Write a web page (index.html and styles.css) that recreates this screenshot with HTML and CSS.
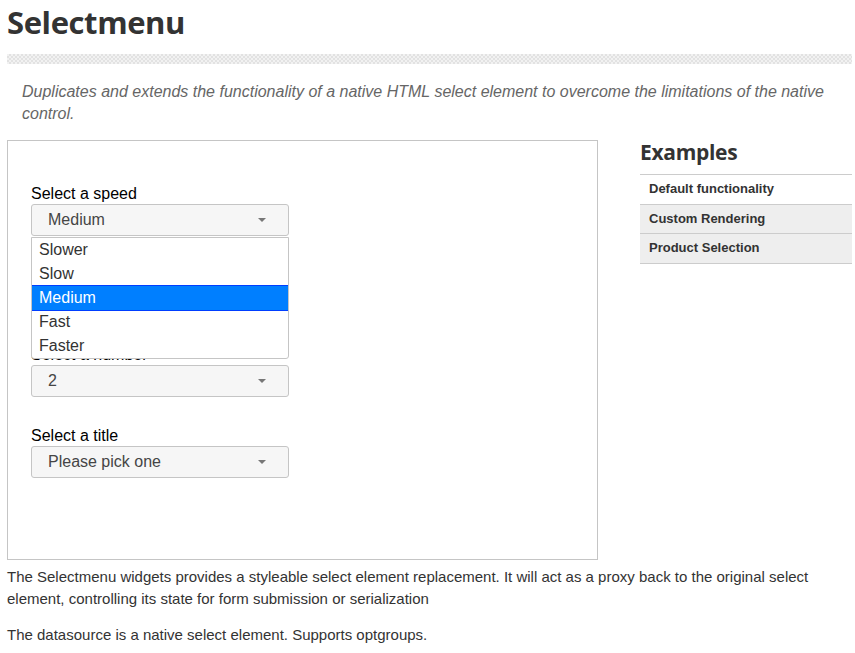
FILE: index.html
```html
<!DOCTYPE html>
<html lang="en">
<head>
  <meta charset="UTF-8">
  <title>Selectmenu</title>
  <link rel="stylesheet" href="styles.css">
</head>
<body>
  <h1 class="entry-title">Selectmenu</h1>
  <div class="hatch"></div>

  <p class="desc">Duplicates and extends the functionality of a native HTML select element to overcome the limitations of the native control.</p>

  <div class="columns">
    <div class="main">
      <div class="demo-frame">
        <div class="field">
          <label>Select a speed</label>
          <div class="sm-button"><span class="sm-text">Medium</span><span class="sm-icon"></span></div>
          <ul class="sm-menu">
            <li>Slower</li>
            <li>Slow</li>
            <li class="active">Medium</li>
            <li>Fast</li>
            <li>Faster</li>
          </ul>
        </div>
        <div class="field">
          <label>Select a file</label>
          <div class="sm-button"><span class="sm-text">Some unknown file</span><span class="sm-icon"></span></div>
        </div>
        <div class="field">
          <label>Select a number</label>
          <div class="sm-button"><span class="sm-text">2</span><span class="sm-icon"></span></div>
        </div>
        <div class="field">
          <label>Select a title</label>
          <div class="sm-button"><span class="sm-text">Please pick one</span><span class="sm-icon"></span></div>
        </div>
      </div>

      <p class="body-text">The Selectmenu widgets provides a styleable select element replacement. It will act as a proxy back to the original select element, controlling its state for form submission or serialization</p>
      <p class="body-text">The datasource is a native select element. Supports optgroups.</p>
    </div>

    <div class="sidebar">
      <h2>Examples</h2>
      <ul class="demo-list">
        <li class="current">Default functionality</li>
        <li>Custom Rendering</li>
        <li>Product Selection</li>
      </ul>
    </div>
  </div>
</body>
</html>
```

FILE: styles.css
```css
body {
  margin: 0;
  padding: 0 3px 0 7px;
  font-family: "Liberation Sans", Arial, sans-serif;
  color: #333;
  overflow: hidden;
}
.entry-title {
  font-family: "Open Sans", "Noto Sans", sans-serif;
  font-weight: 700;
  font-size: 31px;
  letter-spacing: -0.4px;
  line-height: 44px;
  margin: 0;
  color: #333;
}
.hatch {
  margin-top: 10px;
  height: 10px;
  background-color: #f2f2f2;
  background-image: repeating-conic-gradient(#e2e2e2 0 25%, transparent 0 50%);
  background-size: 4px 4px;
}
.desc {
  margin: 0;
  padding: 17px 15px 0;
  font-style: italic;
  font-size: 16px;
  line-height: 22px;
  color: #666;
}
.columns {
  display: flex;
  gap: 42px;
  margin-top: 15px;
}
.main {
  width: 591px;
  flex: none;
}
.demo-frame {
  border: 1px solid #c5c5c5;
  height: 420px;
  padding: 44px 0 0 23px;
  box-sizing: border-box;
  position: relative;
}
.field {
  position: relative;
  width: 258px;
  margin-bottom: 29.5px;
}
.field label {
  display: block;
  font-size: 16px;
  line-height: 18px;
  color: #000;
  margin-bottom: 1px;
}
.sm-button {
  height: 32px;
  box-sizing: border-box;
  border: 1px solid #c5c5c5;
  border-radius: 3px;
  background: #f6f6f6;
  color: #454545;
  font-size: 16px;
  line-height: 30px;
  padding: 0 16px;
  display: flex;
  justify-content: space-between;
  align-items: center;
}
.sm-icon {
  width: 0;
  height: 0;
  border-left: 4px solid transparent;
  border-right: 4px solid transparent;
  border-top: 4px solid #777;
  margin-right: 6px;
}
.sm-menu {
  position: absolute;
  left: 0;
  top: 52px;
  width: 258px;
  box-sizing: border-box;
  margin: 0;
  padding: 0;
  list-style: none;
  background: #fff;
  border: 1px solid #c5c5c5;
  border-radius: 0 0 3px 3px;
  z-index: 2;
}
.sm-menu li {
  font-size: 16px;
  line-height: 18px;
  padding: 3px 7px;
  color: #333;
}
.sm-menu li.active {
  background: #007fff;
  border-top: 1px solid #003eff;
  border-bottom: 1px solid #003eff;
  margin: -1px 0;
  color: #fff;
}
.body-text {
  font-size: 15px;
  line-height: 22px;
  margin: 6px 0 14px;
  color: #333;
  width: 820px;
}
.sidebar {
  width: 212px;
  flex: none;
}
.sidebar h2 {
  font-family: "Open Sans", "Noto Sans", sans-serif;
  font-weight: 700;
  font-size: 21px;
  letter-spacing: -0.3px;
  line-height: 24px;
  margin: 0 0 10px;
  color: #333;
}
.demo-list {
  list-style: none;
  margin: 0;
  padding: 0;
  border-top: 1px solid #ccc;
}
.demo-list li {
  background: #eee;
  border-bottom: 1px solid #ccc;
  font-size: 13px;
  font-weight: 700;
  line-height: 28.5px;
  padding-left: 9px;
  color: #333;
}
.demo-list li.current {
  background: #fff;
}
```
